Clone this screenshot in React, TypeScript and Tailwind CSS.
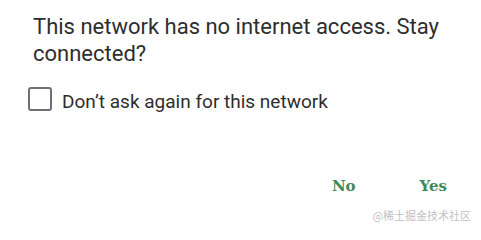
export default function App() {
  return (
    <div className="relative h-[225px] w-[481px] overflow-hidden bg-white font-['Roboto','Liberation_Sans',sans-serif]">
      <p className="pl-[33px] pr-[20px] pt-[13px] text-[22px] leading-[27px] text-[#2e2e2e]">
        This network has no internet access. Stay connected?
      </p>

      <label className="mt-[20px] flex items-start pl-[28px]">
        <span className="h-[24px] w-[24px] shrink-0 rounded-[3px] border-2 border-[#6f6f6f] bg-white" />
        <span className="ml-[10px] mt-[3px] text-[19px] leading-[24px] text-[#2e2e2e]">
          Don’t ask again for this network
        </span>
      </label>

      <div className="mt-[62px] flex justify-end gap-[64px] pr-[34px] font-['DejaVu_Serif',serif] text-[15px] font-bold leading-[20px] text-[#3f8a5c]">
        <button type="button">No</button>
        <button type="button">Yes</button>
      </div>

      <span className="absolute bottom-[3px] right-[10px] font-['Noto_Sans_CJK_SC',sans-serif] text-[11px] leading-[14px] text-[#c2c2c2]">
        @稀土掘金技术社区
      </span>
    </div>
  );
}
